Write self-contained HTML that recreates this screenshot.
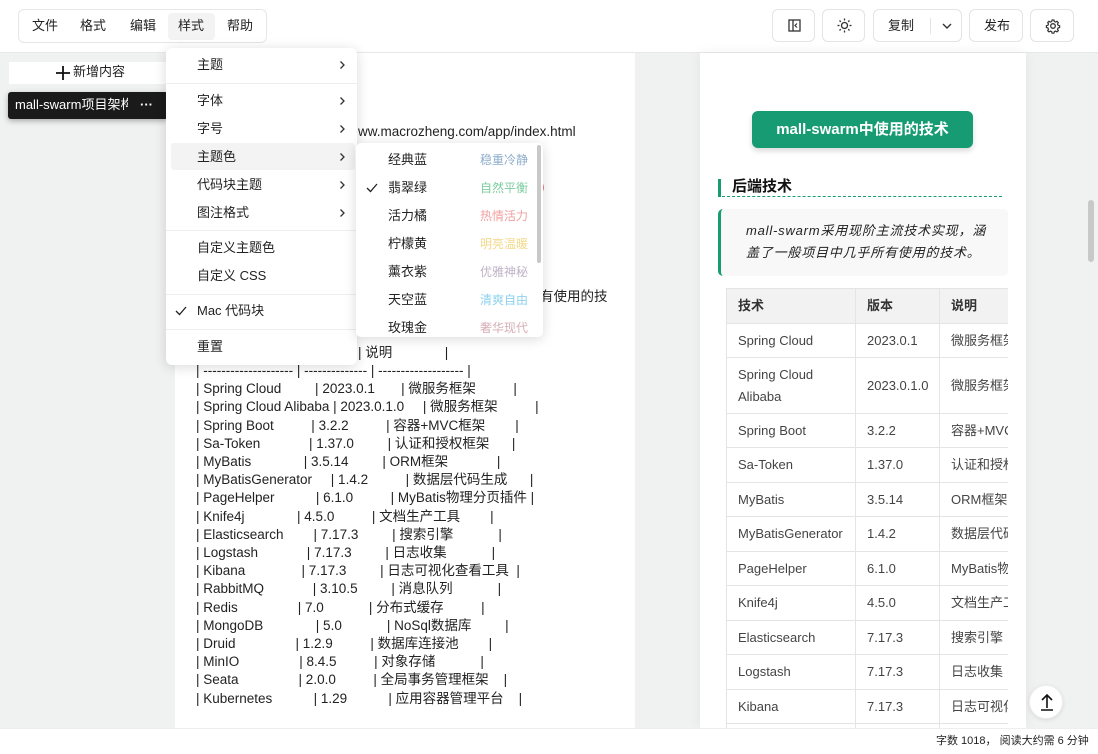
<!DOCTYPE html>
<html><head><meta charset="utf-8">
<style>
*{margin:0;padding:0;box-sizing:border-box}
body{width:1098px;height:754px;overflow:hidden;position:relative;background:#f0f1f1;font-family:"Liberation Sans","Noto Sans CJK SC",sans-serif;font-size:13px;color:#222;line-height:18px}
.a{position:absolute;white-space:nowrap}
.hdr{left:0;top:0;width:1098px;height:53px;background:#fff;border-bottom:1px solid #e8e8e8}
.mb{left:18px;top:9px;width:249px;height:34px;border:1px solid #e6e6e6;border-radius:6px;background:#fff}
.mb span{position:absolute;top:7px;font-size:13px;line-height:18px}
.btn{top:9px;height:33px;border:1px solid #e4e4e4;border-radius:6px;background:#fff}
.ed{left:175px;top:53px;width:460px;height:675px;background:#fff}
.pv{left:700px;top:53px;width:326px;height:675px;background:#fff;box-shadow:0 0 12px rgba(0,0,0,.06)}
.code{left:196px;font-size:13.5px;line-height:18.2px;color:#222;white-space:pre}
.menu{left:166px;top:48px;width:191px;height:317px;background:#fff;border-radius:6px;box-shadow:0 2px 12px rgba(0,0,0,.15)}
.mi{position:absolute;left:31px;font-size:13px;color:#222;line-height:18px}
.ar{position:absolute;left:172px;width:8px;height:10px}
.sep{position:absolute;left:0;width:191px;height:1px;background:#eee}
.sub{left:356px;top:143px;width:187px;height:194px;background:#fff;border-radius:5px;box-shadow:0 2px 12px rgba(0,0,0,.15);overflow:hidden}
.sn{position:absolute;left:32px;font-size:13px;color:#222;line-height:18px}
.sd{position:absolute;left:124px;font-size:12px;line-height:18px}
table{border-collapse:collapse;font-size:13px;color:#444;table-layout:fixed}
td{border:1px solid #e4e4e4;padding:0 11px;vertical-align:middle;line-height:22px;overflow:hidden;white-space:nowrap}
</style></head><body>
<svg width="0" height="0" style="position:absolute"><defs><symbol id="chev" viewBox="0 0 8 10"><path d="M2.5 1.5l3.5 3.5-3.5 3.5" fill="none" stroke="#333" stroke-width="1.3"/></symbol></defs></svg>
<div class="a hdr"></div>
<div class="a mb">
<span style="left:13px">文件</span><span style="left:61px">格式</span><span style="left:111px">编辑</span>
<div style="position:absolute;left:149px;top:3px;width:47px;height:27px;background:#f3f3f3;border-radius:4px"></div>
<span style="left:159px">样式</span><span style="left:208px">帮助</span></div>

<div class="a btn" style="left:772px;width:43px"><svg width="43" height="33"><rect x="16" y="10" width="11" height="11" fill="none" stroke="#333" stroke-width="1.3"/><line x1="20" y1="10" x2="20" y2="21" stroke="#333" stroke-width="1.3"/><path d="M24 13.5l-2 2 2 2" fill="none" stroke="#333" stroke-width="1.2"/></svg></div>
<div class="a btn" style="left:822px;width:43px"><svg width="43" height="33"><circle cx="21.5" cy="15.5" r="3" fill="none" stroke="#333" stroke-width="1.3"/><g stroke="#333" stroke-width="1.3"><line x1="21.5" y1="8.5" x2="21.5" y2="10.5"/><line x1="21.5" y1="20.5" x2="21.5" y2="22.5"/><line x1="14.5" y1="15.5" x2="16.5" y2="15.5"/><line x1="26.5" y1="15.5" x2="28.5" y2="15.5"/><line x1="16.5" y1="10.5" x2="17.8" y2="11.8"/><line x1="25.2" y1="19.2" x2="26.5" y2="20.5"/><line x1="16.5" y1="20.5" x2="17.8" y2="19.2"/><line x1="25.2" y1="11.8" x2="26.5" y2="10.5"/></g></svg></div>
<div class="a btn" style="left:873px;width:89px"><span class="a" style="left:14px;top:7px">复制</span><div class="a" style="left:56px;top:8px;width:1px;height:16px;background:#e4e4e4"></div><svg class="a" style="left:66px;top:9px" width="14" height="14"><path d="M3 5l4 4 4-4" fill="none" stroke="#333" stroke-width="1.4"/></svg></div>
<div class="a btn" style="left:969px;width:54px"><span class="a" style="left:14px;top:7px">发布</span></div>
<div class="a btn" style="left:1030px;width:44px"><svg width="44" height="33"><circle cx="22" cy="16" r="2.3" fill="none" stroke="#333" stroke-width="1.3"/><path d="M21.1 10h1.8l.4 1.5 1.3.6 1.4-.8 1.3 1.3-.8 1.4.6 1.3 1.5.4v1.8l-1.5.4-.6 1.3.8 1.4-1.3 1.3-1.4-.8-1.3.6-.4 1.5h-1.8l-.4-1.5-1.3-.6-1.4.8-1.3-1.3.8-1.4-.6-1.3-1.5-.4v-1.8l1.5-.4.6-1.3-.8-1.4 1.3-1.3 1.4.8 1.3-.6z" fill="none" stroke="#333" stroke-width="1.2"/></svg></div>

<!-- sidebar -->
<div class="a" style="left:9px;top:62px;width:160px;height:22px;background:#fff"></div>
<svg class="a" style="left:55px;top:65px" width="16" height="16"><path d="M8 1v14M1 8h14" stroke="#111" stroke-width="1.8"/></svg>
<div class="a" style="left:73px;top:63px;font-size:13px">新增内容</div>
<div class="a" style="left:8px;top:92px;width:160px;height:27px;background:#1a1a1a;border-radius:3px;box-shadow:0 2px 6px rgba(0,0,0,.3)"></div>
<div class="a" style="left:15px;top:96px;color:#fff;font-size:13px;width:113px;overflow:hidden">mall-swarm项目架构</div>
<div class="a" style="left:140px;top:96px;color:#fff;font-size:13px;font-weight:bold">···</div>

<!-- editor -->
<div class="a ed"></div>
<div class="a" style="left:358px;top:123px;font-size:13.5px">ww.macrozheng.com/app/index.html</div>
<div class="a" style="left:540px;top:178px;font-size:13.5px;color:#e33">)</div>
<div class="a" style="left:540px;top:288px;font-size:13.5px">有使用的技</div>
<div class="a code" style="top:344px;left:358px">| 说明              |</div>
<div class="a code" style="top:362px">| -------------------- | -------------- | ------------------- |
| Spring Cloud         | 2023.0.1       | 微服务框架          |
| Spring Cloud Alibaba | 2023.0.1.0     | 微服务框架          |
| Spring Boot          | 3.2.2          | 容器+MVC框架        |
| Sa-Token             | 1.37.0         | 认证和授权框架      |
| MyBatis              | 3.5.14         | ORM框架             |
| MyBatisGenerator     | 1.4.2          | 数据层代码生成      |
| PageHelper           | 6.1.0          | MyBatis物理分页插件 |
| Knife4j              | 4.5.0          | 文档生产工具        |
| Elasticsearch        | 7.17.3         | 搜索引擎            |
| Logstash             | 7.17.3         | 日志收集            |
| Kibana               | 7.17.3         | 日志可视化查看工具  |
| RabbitMQ             | 3.10.5         | 消息队列            |
| Redis                | 7.0            | 分布式缓存          |
| MongoDB              | 5.0            | NoSql数据库         |
| Druid                | 1.2.9          | 数据库连接池        |
| MinIO                | 8.4.5          | 对象存储            |
| Seata                | 2.0.0          | 全局事务管理框架    |
| Kubernetes           | 1.29           | 应用容器管理平台    |</div>

<!-- preview -->
<div class="a pv"></div>
<div class="a" style="left:752px;top:111px;width:221px;height:37px;background:#179b72;border-radius:6px;box-shadow:0 3px 6px rgba(0,0,0,.15);color:#fff;font-weight:bold;font-size:15px;text-align:center;line-height:37px">mall-swarm中使用的技术</div>
<div class="a" style="left:718px;top:179px;width:3px;height:18px;background:#179b72"></div>
<div class="a" style="left:732px;top:178px;font-weight:bold;font-size:15px;color:#111">后端技术</div>
<div class="a" style="left:722px;top:196px;width:280px;border-top:1px dashed #179b72"></div>
<div class="a" style="left:718px;top:209px;width:290px;height:67px;background:#f8f8f8;border-left:3px solid #179b72;border-radius:5px"></div>
<div class="a" style="left:746px;top:220px;font-style:italic;font-size:13px;line-height:22px;color:#222;white-space:normal;width:250px;letter-spacing:.8px">mall-swarm采用现阶主流技术实现，涵盖了一般项目中几乎所有使用的技术。</div>
<div class="a" style="left:726px;top:288px;width:282px;height:440px;overflow:hidden">
<table style="width:340px">
<colgroup><col style="width:129px"><col style="width:84px"><col style="width:127px"></colgroup>
<tr style="height:35px;background:#f2f2f2;font-weight:bold;color:#333"><td>技术</td><td>版本</td><td>说明</td></tr>
<tr style="height:34px"><td>Spring Cloud</td><td>2023.0.1</td><td>微服务框架</td></tr>
<tr style="height:56px"><td style="white-space:normal">Spring Cloud Alibaba</td><td>2023.0.1.0</td><td>微服务框架</td></tr>
<tr style="height:34px"><td>Spring Boot</td><td>3.2.2</td><td>容器+MVC框架</td></tr>
<tr style="height:35px"><td>Sa-Token</td><td>1.37.0</td><td>认证和授权框架</td></tr>
<tr style="height:34px"><td>MyBatis</td><td>3.5.14</td><td>ORM框架</td></tr>
<tr style="height:35px"><td>MyBatisGenerator</td><td>1.4.2</td><td>数据层代码生成</td></tr>
<tr style="height:34px"><td>PageHelper</td><td>6.1.0</td><td>MyBatis物理分页</td></tr>
<tr style="height:35px"><td>Knife4j</td><td>4.5.0</td><td>文档生产工具</td></tr>
<tr style="height:34px"><td>Elasticsearch</td><td>7.17.3</td><td>搜索引擎</td></tr>
<tr style="height:35px"><td>Logstash</td><td>7.17.3</td><td>日志收集</td></tr>
<tr style="height:34px"><td>Kibana</td><td>7.17.3</td><td>日志可视化查看</td></tr>
<tr style="height:34px"><td>RabbitMQ</td><td>3.10.5</td><td>消息队列</td></tr>
</table></div>
<div class="a" style="left:1088px;top:200px;width:6px;height:62px;background:#c8c8c8;border-radius:3px"></div>
<div class="a" style="left:1029px;top:685px;width:34px;height:34px;border-radius:50%;background:#fff;border:1px solid #eee;box-shadow:0 1px 4px rgba(0,0,0,.1)"><svg width="34" height="34"><path d="M17 9v13M12 14l5-5 5 5M11 24h12" fill="none" stroke="#111" stroke-width="1.6"/></svg></div>

<!-- footer -->
<div class="a" style="left:0;top:728px;width:1098px;height:26px;background:#fff;border-top:1px solid #eee"></div>
<div class="a" style="left:936px;top:732px;font-size:11px;color:#222">字数 1018， 阅读大约需 6 分钟</div>

<!-- menu -->
<div class="a menu">
<div style="position:absolute;left:5px;top:95px;width:184px;height:27px;background:#f3f3f3;border-radius:3px"></div>
<span class="mi" style="top:8px">主题</span><svg class="ar" style="top:12px"><use href="#chev"/></svg>
<div class="sep" style="top:35px"></div>
<span class="mi" style="top:44px">字体</span><svg class="ar" style="top:48px"><use href="#chev"/></svg>
<span class="mi" style="top:72px">字号</span><svg class="ar" style="top:76px"><use href="#chev"/></svg>
<span class="mi" style="top:100px">主题色</span><svg class="ar" style="top:104px"><use href="#chev"/></svg>
<span class="mi" style="top:128px">代码块主题</span><svg class="ar" style="top:132px"><use href="#chev"/></svg>
<span class="mi" style="top:156px">图注格式</span><svg class="ar" style="top:160px"><use href="#chev"/></svg>
<div class="sep" style="top:182px"></div>
<span class="mi" style="top:191px">自定义主题色</span>
<span class="mi" style="top:219px">自定义 CSS</span>
<div class="sep" style="top:246px"></div>
<svg style="position:absolute;left:9px;top:258px" width="12" height="10"><path d="M1 5l3.5 3.5L11 1" fill="none" stroke="#222" stroke-width="1.3"/></svg><span class="mi" style="top:254px">Mac 代码块</span>
<div class="sep" style="top:281px"></div>
<span class="mi" style="top:290px">重置</span>
</div>
<div class="a sub">
<span class="sn" style="top:8px">经典蓝</span><span class="sd" style="top:8px;color:#8eaccb">稳重冷静</span>
<svg style="position:absolute;left:10px;top:40px" width="12" height="10"><path d="M1 5l3.5 3.5L11 1" fill="none" stroke="#222" stroke-width="1.3"/></svg><span class="sn" style="top:36px">翡翠绿</span><span class="sd" style="top:36px;color:#7dcc9f">自然平衡</span>
<span class="sn" style="top:64px">活力橘</span><span class="sd" style="top:64px;color:#f2a0a0">热情活力</span>
<span class="sn" style="top:92px">柠檬黄</span><span class="sd" style="top:92px;color:#f3d889">明亮温暖</span>
<span class="sn" style="top:120px">薰衣紫</span><span class="sd" style="top:120px;color:#bfb2c5">优雅神秘</span>
<span class="sn" style="top:148px">天空蓝</span><span class="sd" style="top:148px;color:#8bd2ec">清爽自由</span>
<span class="sn" style="top:176px">玫瑰金</span><span class="sd" style="top:176px;color:#d6adb5">奢华现代</span>
<div style="position:absolute;left:181px;top:2px;width:4px;height:118px;background:#c8c8c8;border-radius:2px"></div>
</div>
</body></html>
